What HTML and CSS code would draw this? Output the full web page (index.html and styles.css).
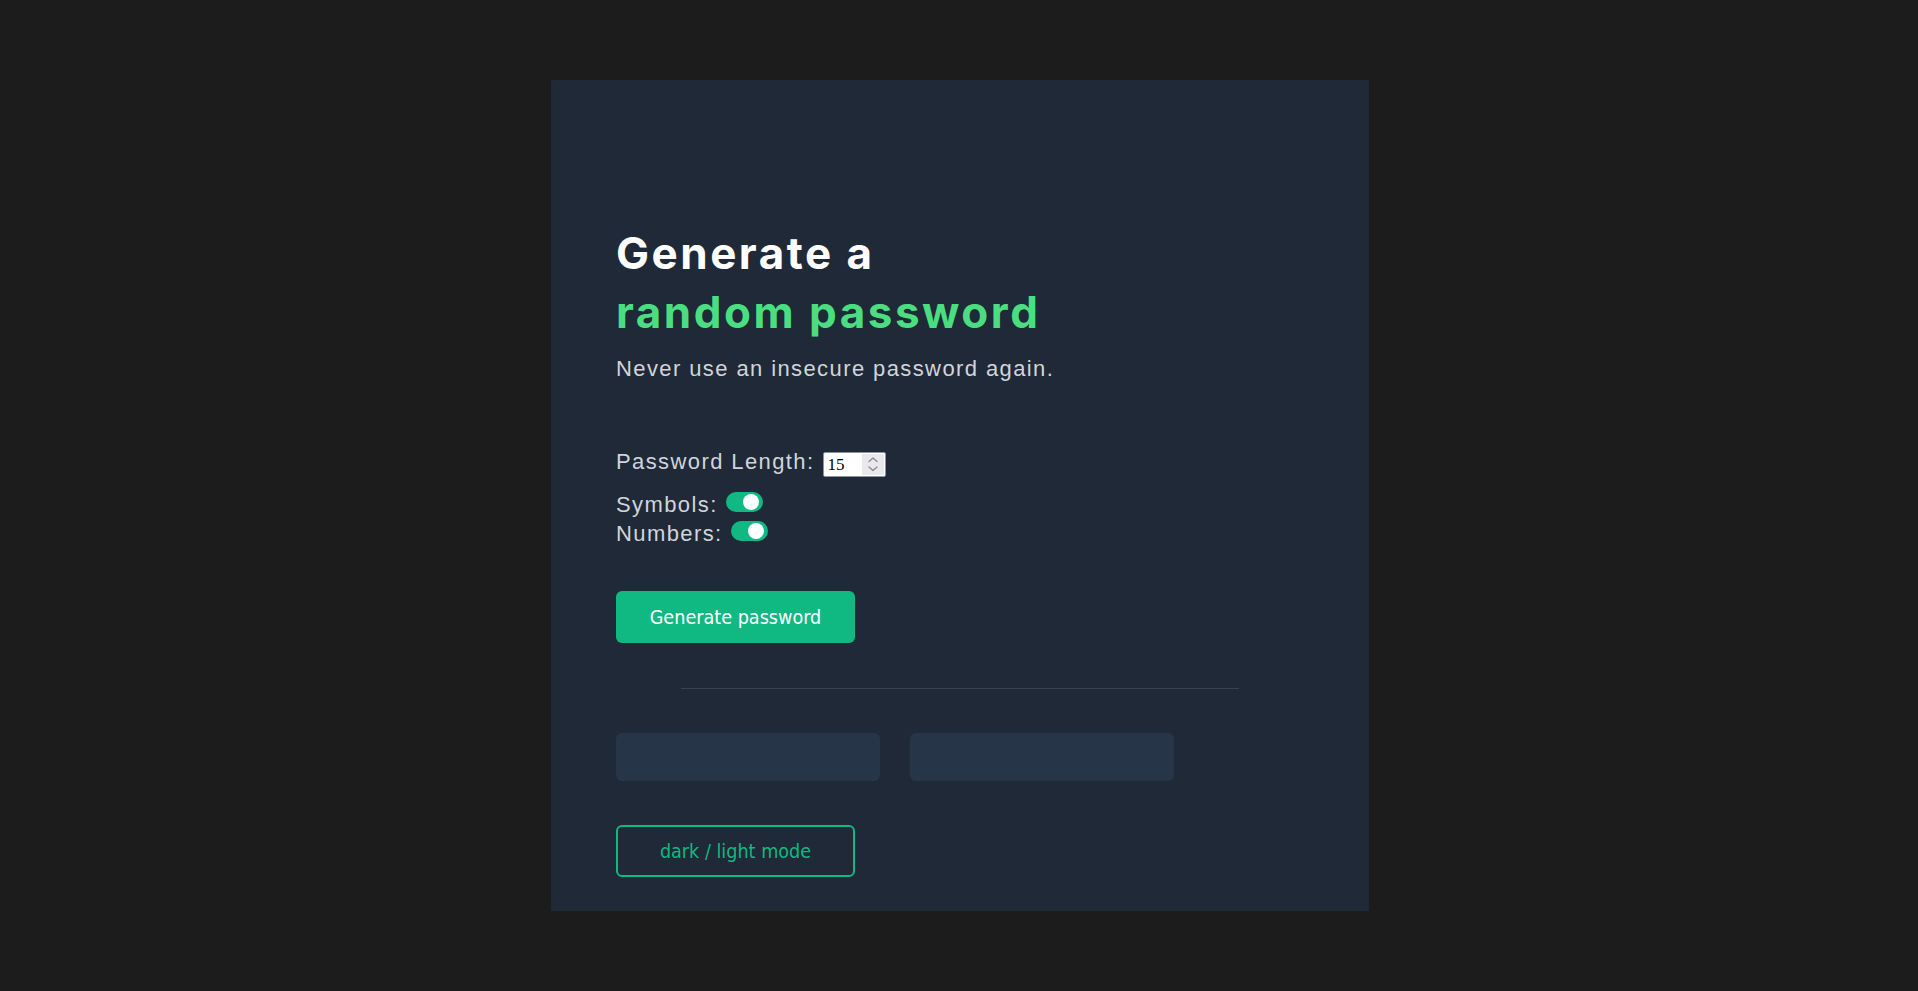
FILE: index.html
```html
<!DOCTYPE html>
<html lang="en">
<head>
<meta charset="utf-8">
<title>Password Generator</title>
<link rel="stylesheet" href="styles.css">
</head>
<body>
  <main class="card">
    <h1 class="title">Generate a<span class="accent">random password</span></h1>
    <p class="subtitle">Never use an insecure password again.</p>

    <div class="options">
      <div class="row-length">
        <label class="opt-label" for="len">Password Length:</label>
        <span class="num-field">
          <input class="num-input" id="len" type="number" value="15" min="1" max="64">
          <span class="spin">
            <svg width="22" height="21" viewBox="0 0 22 21" aria-hidden="true">
              <polyline points="7,7.5 11,4 15,7.5" fill="none" stroke="#8a8a8e" stroke-width="1.3" stroke-linecap="round" stroke-linejoin="round"/>
              <polyline points="7,13 11,16.5 15,13" fill="none" stroke="#8a8a8e" stroke-width="1.3" stroke-linecap="round" stroke-linejoin="round"/>
            </svg>
          </span>
        </span>
      </div>
      <div class="row-toggle">Symbols:<span class="toggle"></span></div>
      <div class="row-toggle">Numbers:<span class="toggle"></span></div>
    </div>

    <button class="btn-generate" type="button">Generate password</button>

    <hr class="divider">

    <div class="results">
      <div class="result-box"></div>
      <div class="result-box"></div>
    </div>

    <button class="btn-mode" type="button">dark / light mode</button>
  </main>
</body>
</html>
```
FILE: styles.css
```css
html, body {
  margin: 0;
  padding: 0;
}

body {
  background: #1c1c1c;
  min-height: 100vh;
  display: flex;
  align-items: center;
  justify-content: center;
  font-family: "Liberation Sans", Arial, sans-serif;
}

.card {
  box-sizing: border-box;
  width: 818px;
  margin-left: 2px;
  padding: 144px 65px 34px;
  background: #1f2937;
  display: flex;
  flex-direction: column;
  align-items: flex-start;
}

.title {
  margin: 0;
  font-family: "Inter", "Noto Sans", sans-serif;
  font-weight: 700;
  font-size: 44px;
  line-height: 59px;
  letter-spacing: 2.5px;
  color: #ffffff;
}

.accent {
  display: block;
  color: #4ade80;
}

.subtitle {
  margin: 14px 0 0;
  font-size: 22px;
  line-height: 26px;
  letter-spacing: 1.4px;
  color: #d1d5db;
}

.options {
  margin-top: 67px;
  display: flex;
  flex-direction: column;
  color: #d1d5db;
  font-size: 22px;
  letter-spacing: 1.4px;
}

.row-length {
  display: flex;
  align-items: flex-start;
  line-height: 26px;
}

.num-field {
  box-sizing: border-box;
  display: flex;
  margin: 3px 0 0 8px;
  width: 63px;
  height: 25px;
  padding: 1px;
  border: 1px solid #8f8f9d;
  border-radius: 2px;
  background: #ffffff;
}

.num-input {
  flex: 1;
  width: 0;
  min-width: 0;
  margin: 0;
  padding: 0 0 0 3px;
  border: none;
  outline: none;
  background: transparent;
  color: #000;
  font-family: "Liberation Serif", "Times New Roman", serif;
  font-size: 17px;
  letter-spacing: 0;
  -moz-appearance: textfield;
  appearance: textfield;
}

.num-input::-webkit-inner-spin-button,
.num-input::-webkit-outer-spin-button {
  -webkit-appearance: none;
  margin: 0;
}

.spin {
  display: flex;
  width: 22px;
  background: #e9e9ed;
}

.row-toggle {
  line-height: 29px;
}

.row-length + .row-toggle {
  margin-top: 13px;
}

.toggle {
  display: inline-block;
  width: 37px;
  height: 20px;
  margin-left: 8px;
  border-radius: 10px;
  background: #10b981;
}

.toggle::after {
  content: "";
  display: block;
  width: 16px;
  height: 16px;
  margin: 2px 0 0 17px;
  border-radius: 50%;
  background: #ffffff;
}

.btn-generate,
.btn-mode {
  box-sizing: border-box;
  width: 239px;
  height: 52px;
  border-radius: 6px;
  font-family: "DejaVu Sans Condensed", "DejaVu Sans", sans-serif;
  font-size: 19.6px;
  cursor: pointer;
}

.btn-generate {
  margin-top: 43px;
  border: none;
  background: #10b981;
  color: #ffffff;
}

.divider {
  align-self: center;
  width: 558px;
  height: 0;
  margin: 45px 0 0;
  border: none;
  border-top: 1px solid #364152;
}

.results {
  margin-top: 44px;
  display: flex;
  gap: 30px;
}

.result-box {
  width: 264px;
  height: 48px;
  border-radius: 6px;
  background: #273549;
}

.btn-mode {
  margin-top: 44px;
  border: 2px solid #10b981;
  background: transparent;
  color: #10b981;
}
```
